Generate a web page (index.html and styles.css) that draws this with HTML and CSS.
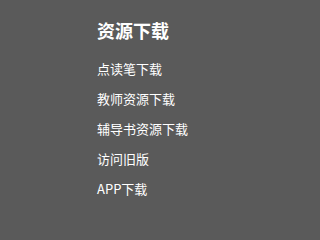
FILE: index.html
```html
<!DOCTYPE html>
<html>
<head>
<meta charset="utf-8">
<link rel="stylesheet" href="styles.css">
</head>
<body>
<div class="panel">
  <h3 class="title">资源下载</h3>
  <ul class="links">
    <li><a href="#">点读笔下载</a></li>
    <li><a href="#">教师资源下载</a></li>
    <li><a href="#">辅导书资源下载</a></li>
    <li><a href="#">访问旧版</a></li>
    <li><a href="#">APP下载</a></li>
  </ul>
</div>
</body>
</html>
```
FILE: styles.css
```css
html, body {
  margin: 0;
  padding: 0;
  background: #5a5a5a;
  height: 100%;
}
body {
  font-family: "Microsoft YaHei", "Noto Sans CJK SC", "Noto Sans", sans-serif;
  color: #fff;
}
.panel {
  padding: 18px 0 0 97px;
}
.title {
  margin: 0;
  font-size: 18px;
  font-weight: bold;
  line-height: 24px;
}
.links {
  list-style: none;
  margin: 0;
  padding: 12px 0 0 0;
}
.links li {
  font-size: 13px;
  line-height: 30px;
}
.links a {
  color: #fff;
  text-decoration: none;
}
```
